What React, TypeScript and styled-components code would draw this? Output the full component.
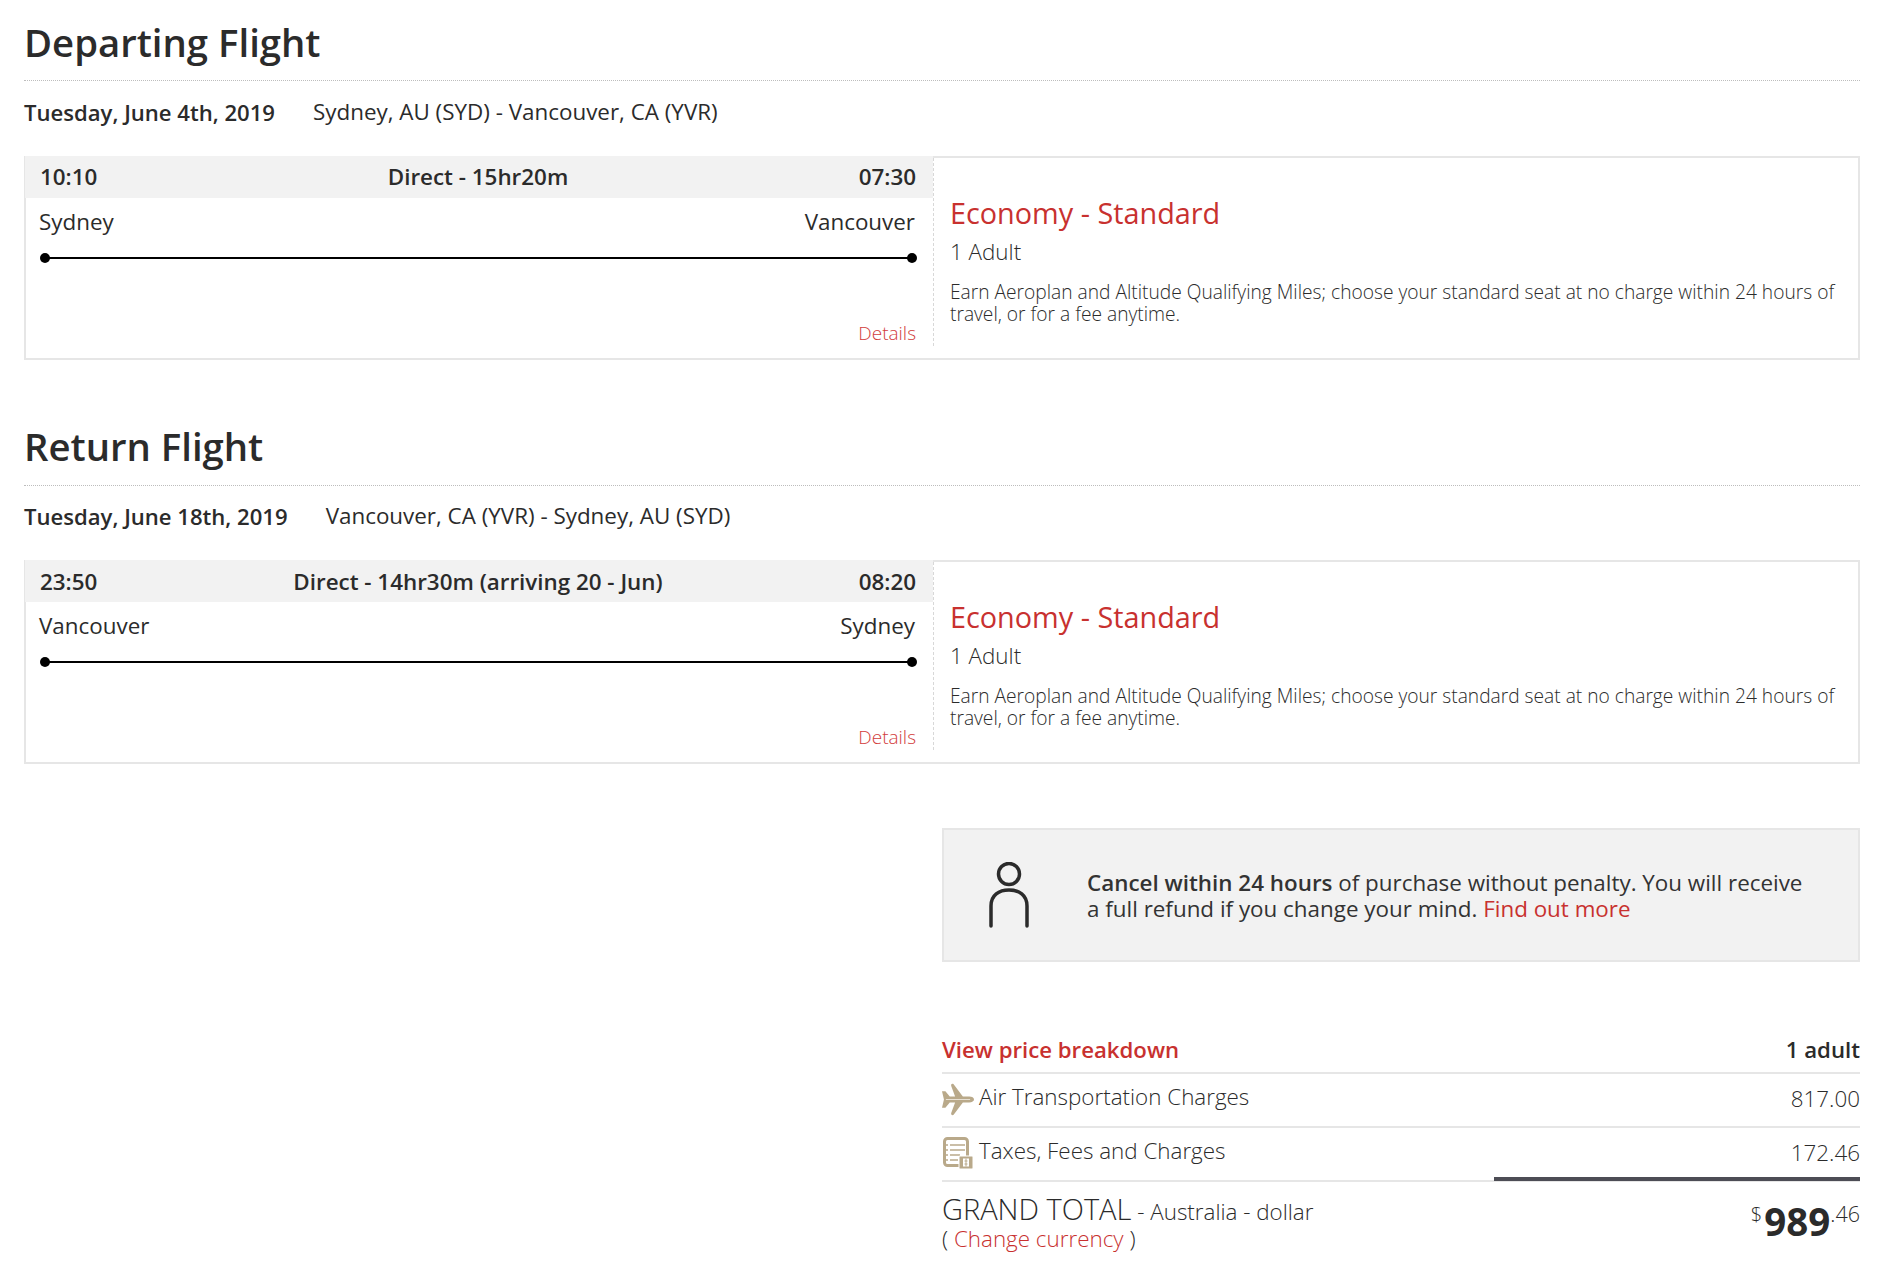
import { createGlobalStyle } from "styled-components";
import styled from "styled-components";

const GlobalStyle = createGlobalStyle`
  html, body {
    margin: 0;
    padding: 0;
    background: #fff;
    font-family: "Open Sans", "Liberation Sans", sans-serif;
    color: #2b2b2b;
  }
`;

const Page = styled.div`
  width: 1888px;
  height: 1264px;
  box-sizing: border-box;
  padding: 0 28px 0 24px;
  overflow: hidden;
`;

const Section = styled.section`
  height: 404.5px;
`;

const Title = styled.h1`
  margin: 0;
  height: 81px;
  box-sizing: border-box;
  padding-top: 16.5px;
  font-size: 38.3px;
  line-height: 50px;
  font-weight: 600;
  color: #2b2b2b;
  border-bottom: 1px dotted #bdbdbd;
`;

const RouteRow = styled.div`
  display: flex;
  gap: 38px;
  height: 74.5px;
  padding-top: 15.5px;
  box-sizing: border-box;
  font-size: 22.4px;
  line-height: 30px;
`;

const DateText = styled.span`
  font-weight: 600;
  font-size: 22.1px;
`;

const Card = styled.div`
  display: flex;
  height: 204px;
  box-sizing: border-box;
  border: 2px solid #e6e6e6;
`;

const Timeline = styled.div`
  width: 908px;
  margin-left: -1px;
  display: flex;
  flex-direction: column;
  height: 188px;
  border-right: 1px dashed #d8d8d8;
  flex-shrink: 0;
`;

const TimeBar = styled.div`
  margin-top: -2px;
  height: 42px;
  flex-shrink: 0;
  display: grid;
  grid-template-columns: 1fr auto 1fr;
  align-items: center;
  padding: 0 17px 0 15px;
  background: #f2f2f2;
  font-size: 22.4px;
  font-weight: 600;
`;

const TimeEnd = styled.span`
  text-align: right;
`;

const Cities = styled.div`
  display: flex;
  justify-content: space-between;
  padding: 9px 18px 0 14px;
  font-size: 22.4px;
  line-height: 30px;
`;

const Track = styled.div`
  position: relative;
  height: 2px;
  margin: 20px 17px 0 16px;
  background: #000;
  &::before,
  &::after {
    content: "";
    position: absolute;
    top: -4px;
    width: 10px;
    height: 10px;
    border-radius: 50%;
    background: #000;
  }
  &::before {
    left: -1px;
  }
  &::after {
    right: -1px;
  }
`;

const Details = styled.a`
  margin-top: auto;
  align-self: flex-end;
  padding-right: 17px;
  font-size: 19px;
  line-height: 26px;
  font-weight: 300;
  color: #d23c3c;
`;

const Fare = styled.div`
  flex: 1;
  padding: 35px 16px 0 16px;
`;

const FareName = styled.div`
  font-size: 28.8px;
  line-height: 40px;
  color: #c8312f;
`;

const Passengers = styled.div`
  margin-top: 4px;
  font-size: 22.4px;
  line-height: 30px;
  font-weight: 300;
`;

const FareNote = styled.p`
  margin: 14px 0 0;
  font-size: 19.2px;
  line-height: 22px;
  font-weight: 300;
`;

const Aside = styled.div`
  margin-left: auto;
  margin-top: 19px;
  width: 918px;
`;

const Notice = styled.div`
  display: flex;
  align-items: center;
  height: 134px;
  box-sizing: border-box;
  border: 2px solid #e6e6e6;
  background: #f2f2f2;
  padding-left: 45px;
`;

const NoticeText = styled.p`
  margin: 2px 0 0 58px;
  font-size: 22.4px;
  line-height: 26px;
  color: #333;
`;

const Strong = styled.b`
  font-weight: 600;
`;

const RedLink = styled.a`
  color: #c8312f;
`;

const PriceHead = styled.div`
  display: flex;
  justify-content: space-between;
  align-items: center;
  margin-top: 70px;
  height: 40px;
  font-size: 22.2px;
  font-weight: 600;
  border-bottom: 2px solid #e6e6e6;
  & > * {
    margin-bottom: 6px;
  }
`;

const HeadLink = styled.a`
  color: #c8312f;
`;

const PriceRow = styled.div`
  position: relative;
  display: flex;
  justify-content: space-between;
  align-items: center;
  height: 52px;
  font-size: 22.4px;
  font-weight: 300;
  border-bottom: 2px solid #e6e6e6;
`;

const ChargeName = styled.span`
  display: flex;
  align-items: center;
  gap: 5px;
  line-height: 30px;
  height: 30px;
  margin-bottom: 6px;
`;

const IconSlot = styled.span`
  display: flex;
  width: 32px;
  height: 33px;
  margin-top: 4px;
`;

const Amount = styled.span`
  margin-bottom: 3px;
`;

const SumRule = styled.div`
  position: absolute;
  right: 0;
  bottom: -1px;
  width: 366px;
  height: 4px;
  background: #4d4d55;
`;

const Total = styled.div`
  display: flex;
  justify-content: space-between;
  padding-top: 13px;
`;

const TotalLabel = styled.div`
  font-size: 22.4px;
  line-height: 27px;
  font-weight: 300;
`;

const TotalBig = styled.span`
  font-size: 29px;
`;

const Price = styled.div`
  display: flex;
  align-items: flex-start;
  font-weight: 300;
  font-size: 20px;
  line-height: 26px;
  padding-top: 3px;
`;

const Currency = styled.span`
  margin-top: 4px;
`;

const PriceMain = styled.span`
  font-size: 38.5px;
  line-height: 46px;
  font-weight: 700;
  margin-left: 2px;
`;

const PriceCents = styled.span`
  font-size: 21.5px;
  margin-top: 3px;
`;

const PlaneIcon = () => (
  <svg width="33" height="33" viewBox="0 0 33 33">
    <path
      fill="#b9a98a"
      d="M0 8h3.500L8 13.500h5.500L9.500 2.500C9 .8 10.500-.3 12 .8l9.500 12.700h6.500c3 0 5 1.300 5 3s-2 3-5 3h-6.500L12 32.200c-1.500 1.100-3 0-2.500-1.700l4-11h-5.500L3.500 25H0l2-8.500z"
    />
    <path stroke="#e9e3d8" strokeWidth="1" d="M4 16.500h25" />
  </svg>
);

const TaxIcon = () => (
  <svg width="32" height="33" viewBox="0 0 32 33">
    <rect x="2.500" y="1.500" width="23" height="27" rx="3" fill="none" stroke="#b9a98a" strokeWidth="3" />
    <path d="M8 8h15M8 13h15M8 18h10M8 23h8" stroke="#b9a98a" strokeWidth="1.500" />
    <path d="M4 8h2M4 13h2M4 18h2M4 23h2" stroke="#b9a98a" strokeWidth="1.500" />
    <rect x="17" y="19" width="14" height="13" rx="1" fill="#b9a98a" stroke="#fff" strokeWidth="1" />
    <rect x="21" y="21.500" width="6" height="8" fill="#fff" />
    <path d="M24 21.500v8M22.500 24h3M22.500 27h3" stroke="#b9a98a" strokeWidth="1" />
  </svg>
);

const PersonIcon = () => (
  <svg width="40" height="66" viewBox="0 0 40 66" fill="none" stroke="#2b2b2b" strokeWidth="3.500" strokeLinecap="round">
    <circle cx="20" cy="12" r="10.500" />
    <path d="M2 64V44C2 33 10 28 20 28s18 5 18 16v20" />
  </svg>
);

const flights = [
  {
    title: "Departing Flight",
    date: "Tuesday, June 4th, 2019",
    route: "Sydney, AU (SYD) - Vancouver, CA (YVR)",
    start: "10:10",
    end: "07:30",
    summary: "Direct - 15hr20m",
    from: "Sydney",
    to: "Vancouver",
  },
  {
    title: "Return Flight",
    date: "Tuesday, June 18th, 2019",
    route: "Vancouver, CA (YVR) - Sydney, AU (SYD)",
    start: "23:50",
    end: "08:20",
    summary: "Direct - 14hr30m (arriving 20 - Jun)",
    from: "Vancouver",
    to: "Sydney",
  },
];

export default function App() {
  return (
    <Page>
      <GlobalStyle />
      {flights.map((flight) => (
        <Section key={flight.title}>
          <Title>{flight.title}</Title>
          <RouteRow>
            <DateText>{flight.date}</DateText>
            <span>{flight.route}</span>
          </RouteRow>
          <Card>
            <Timeline>
              <TimeBar>
                <span>{flight.start}</span>
                <span>{flight.summary}</span>
                <TimeEnd>{flight.end}</TimeEnd>
              </TimeBar>
              <Cities>
                <span>{flight.from}</span>
                <span>{flight.to}</span>
              </Cities>
              <Track />
              <Details>Details</Details>
            </Timeline>
            <Fare>
              <FareName>Economy - Standard</FareName>
              <Passengers>1 Adult</Passengers>
              <FareNote>
                Earn Aeroplan and Altitude Qualifying Miles; choose your standard seat at no charge within 24 hours of
                travel, or for a fee anytime.
              </FareNote>
            </Fare>
          </Card>
        </Section>
      ))}
      <Aside>
        <Notice>
          <PersonIcon />
          <NoticeText>
            <Strong>Cancel within 24 hours</Strong> of purchase without penalty. You will receive
            <br />
            a full refund if you change your mind. <RedLink>Find out more</RedLink>
          </NoticeText>
        </Notice>
        <PriceHead>
          <HeadLink>View price breakdown</HeadLink>
          <span>1 adult</span>
        </PriceHead>
        <PriceRow>
          <ChargeName>
            <IconSlot>
              <PlaneIcon />
            </IconSlot>
            Air Transportation Charges
          </ChargeName>
          <Amount>817.00</Amount>
        </PriceRow>
        <PriceRow>
          <ChargeName>
            <IconSlot>
              <TaxIcon />
            </IconSlot>
            Taxes, Fees and Charges
          </ChargeName>
          <Amount>172.46</Amount>
          <SumRule />
        </PriceRow>
        <Total>
          <TotalLabel>
            <TotalBig>GRAND TOTAL</TotalBig> - Australia - dollar
            <br />( <RedLink>Change currency</RedLink> )
          </TotalLabel>
          <Price>
            <Currency>$</Currency>
            <PriceMain>989</PriceMain>
            <PriceCents>.46</PriceCents>
          </Price>
        </Total>
      </Aside>
    </Page>
  );
}
